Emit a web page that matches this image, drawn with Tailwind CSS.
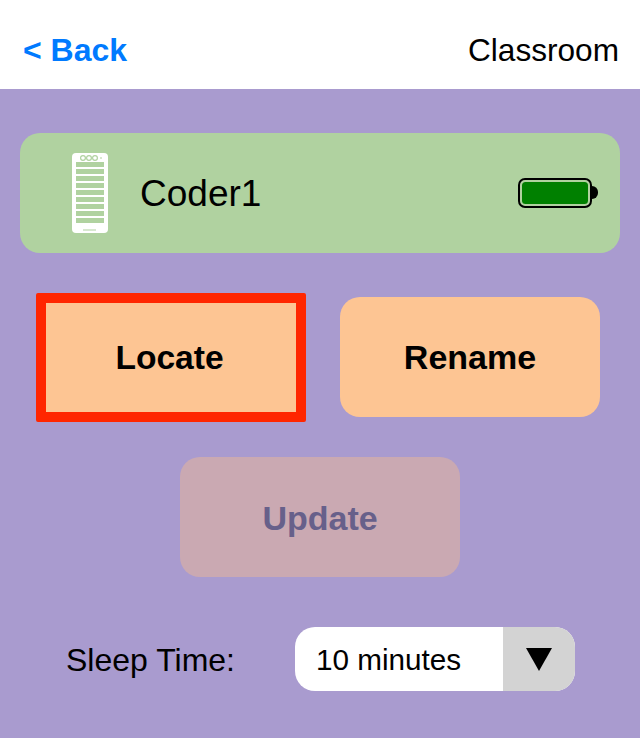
<!DOCTYPE html>
<html lang="en">
<head>
  <meta charset="UTF-8">
  <meta name="viewport" content="width=device-width, initial-scale=1.0">
  <title>Classroom</title>
  <script src="https://cdn.jsdelivr.net/npm/@tailwindcss/browser@4"></script>
</head>
<body class="h-[738px] overflow-hidden bg-[#a99bcf] font-['Liberation_Sans',sans-serif] text-black">
  <!-- Nav -->
  <header class="flex h-[89px] items-center justify-between bg-white pl-[23px] pr-[21px] pt-[12px]">
    <a href="#" class="pb-[2px] text-[32px] font-bold text-[#007aff]">&lt; Back</a>
    <span class="text-[31.6px]">Classroom</span>
  </header>

  <main class="flex flex-col px-[20px] pt-[44px]">
    <!-- Device card -->
    <section class="flex h-[120px] items-center rounded-[20px] bg-[#b0d2a0] pl-[52px] pr-[22px]">
      <svg class="h-[80px] w-[36px] shrink-0" viewBox="0 0 36 80">
        <rect width="36" height="80" rx="4" fill="#fff"/>
        <g fill="none" stroke="#b0d2a0" stroke-width="1.2">
          <circle cx="11" cy="5" r="2.4"/>
          <circle cx="17" cy="5" r="2.4"/>
          <circle cx="23" cy="5" r="2.4"/>
        </g>
        <g fill="#b0d2a0">
          <rect x="28" y="4.5" width="2" height="1"/>
          <rect x="4" y="9" width="28" height="5"/>
          <rect x="4" y="16" width="28" height="5"/>
          <rect x="4" y="23" width="28" height="5"/>
          <rect x="4" y="30" width="28" height="5"/>
          <rect x="4" y="37" width="28" height="5"/>
          <rect x="4" y="44" width="28" height="5"/>
          <rect x="4" y="51" width="28" height="5"/>
          <rect x="4" y="58" width="28" height="5"/>
          <rect x="4" y="65" width="28" height="5"/>
          <rect x="11" y="76.5" width="13" height="1"/>
        </g>
      </svg>
      <span class="ml-[32px] pt-[2px] text-[37px]">Coder1</span>
      <svg class="ml-auto h-[30px] w-[80px] shrink-0" viewBox="0 0 80 30">
        <path d="M73 8h1a6 6 0 0 1 6 6v1a6 6 0 0 1-6 6h-1z" fill="#000"/>
        <rect x="1" y="1" width="72" height="28" rx="6" fill="#b0d2a0" stroke="#000" stroke-width="2"/>
        <rect x="4" y="4" width="66" height="22" rx="3.5" fill="#008000"/>
      </svg>
    </section>

    <!-- Actions -->
    <div class="mt-[40px] flex items-start pl-[16px]">
      <button class="h-[129px] w-[270px] rounded-[2px] border-[10px] border-[#ff2600] bg-[#fdc593] pr-[3px] pt-[2px] text-[33.6px] font-bold">Locate</button>
      <button class="ml-[34px] mt-[4px] h-[120px] w-[260px] rounded-[20px] bg-[#fdc593] text-[34px] font-bold">Rename</button>
    </div>
    <button class="mx-auto mt-[35px] h-[120px] w-[280px] rounded-[20px] bg-[#caa9b2] pt-[2px] text-[34px] font-bold text-[#67608a]">Update</button>

    <!-- Sleep time -->
    <div class="mt-[50px] flex items-center pl-[46px]">
      <label class="pt-[2px] text-[32px]">Sleep Time:</label>
      <div class="ml-[60px] flex h-[64px] w-[280px] overflow-hidden rounded-[20px] bg-white">
        <span class="flex-1 pl-[21px] text-[29.7px] leading-[66px]">10 minutes</span>
        <span class="flex w-[72px] items-center justify-center bg-[#d3d3d3] pt-[1px]">
          <svg class="h-[23px] w-[26px]" viewBox="0 0 26 23"><path d="M0 0h26L13 23z" fill="#000"/></svg>
        </span>
      </div>
    </div>
  </main>
</body>
</html>
